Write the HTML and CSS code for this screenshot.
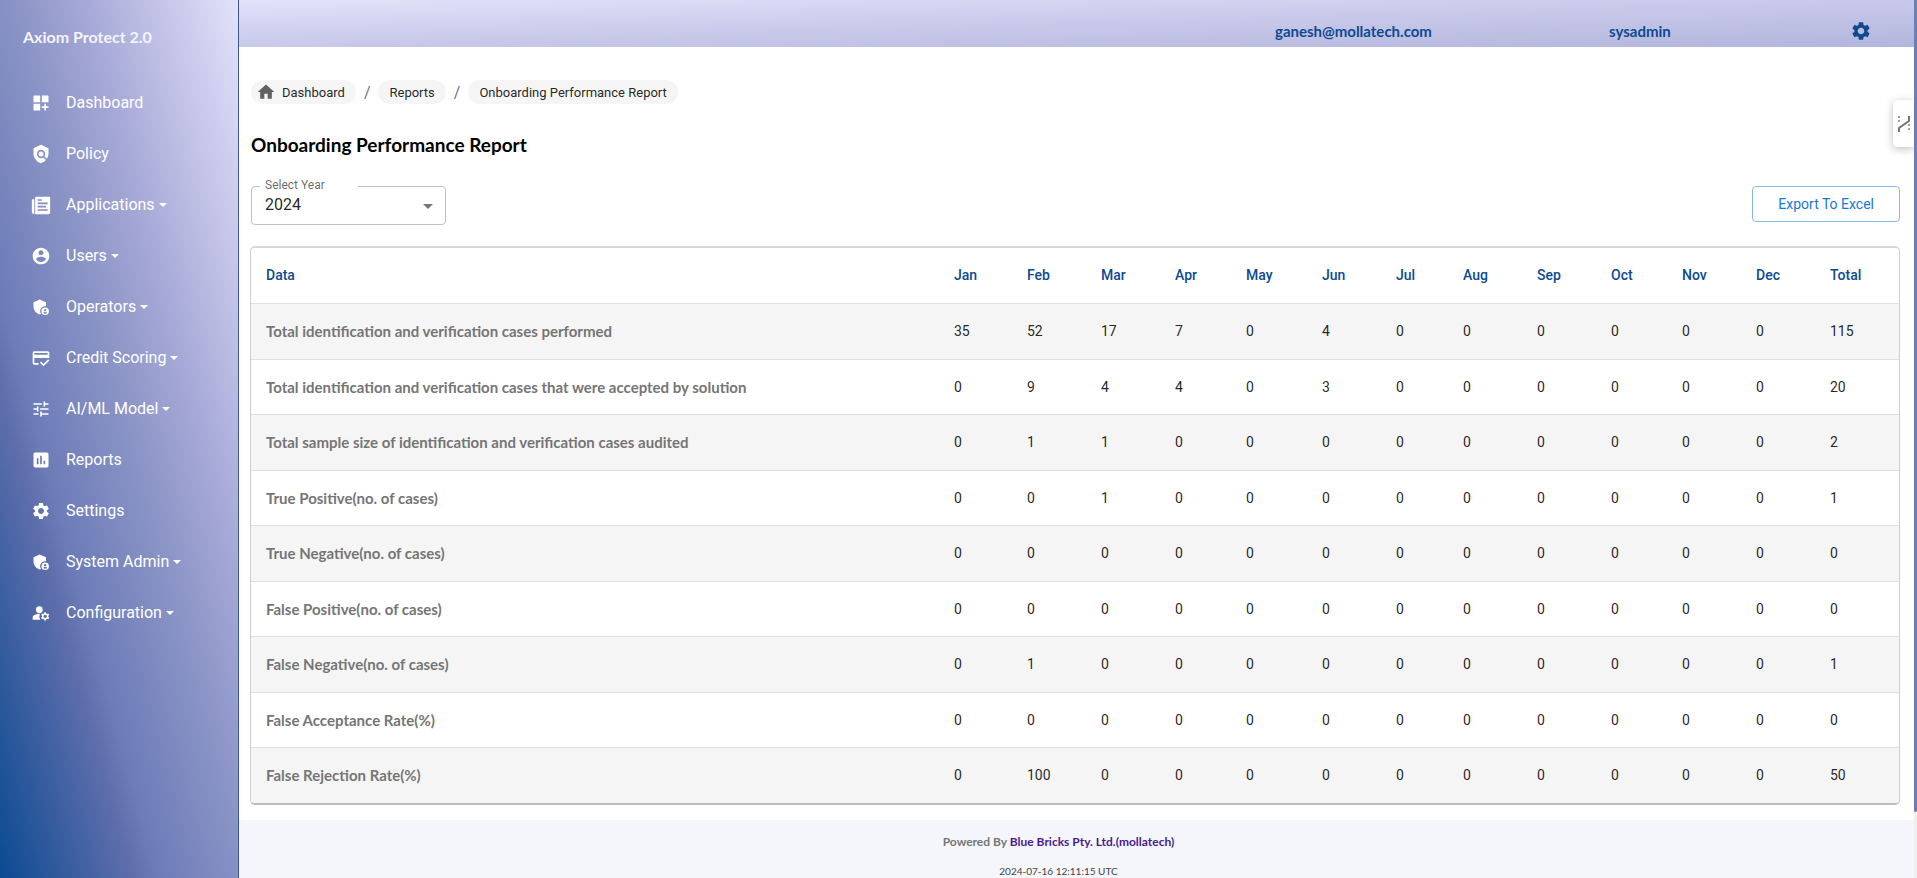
FILE: index.html
```html
<!DOCTYPE html>
<html lang="en">
<head>
<meta charset="utf-8">
<title>Onboarding Performance Report</title>
<link rel="stylesheet" href="styles.css">
</head>
<body>
<svg class="sprite" aria-hidden="true">
  <symbol id="i-shield-user" viewBox="0 0 24 24"><path d="M17 11c.34 0 .67.04 1 .09V6.27L10.5 3 3 6.27v4.91c0 4.54 3.2 8.79 7.5 9.82.55-.13 1.08-.32 1.6-.55-.69-.98-1.1-2.17-1.1-3.45 0-3.31 2.69-6 6-6z"/><path fill-rule="evenodd" d="M17 12.500a4.500 4.500 0 1 0 0 9 4.500 4.500 0 0 0 0-9zm0 1.900a1.400 1.400 0 1 1 0 2.800 1.400 1.400 0 0 1 0-2.800zm0 5.700c-.93 0-1.740-.46-2.240-1.170.05-.72 1.510-1.080 2.240-1.080s2.190.36 2.240 1.080c-.5.71-1.310 1.170-2.240 1.170z"/></symbol>
  <symbol id="i-gear" viewBox="0 0 24 24"><path d="M19.14 12.94c.04-.3.06-.61.06-.94 0-.32-.02-.64-.07-.94l2.03-1.58c.18-.14.23-.41.12-.61l-1.92-3.32c-.12-.22-.37-.29-.59-.22l-2.39.96c-.5-.38-1.03-.7-1.62-.94l-.36-2.54c-.04-.24-.24-.41-.48-.41h-3.84c-.24 0-.43.17-.47.41l-.36 2.54c-.59.24-1.13.57-1.62.94l-2.39-.96c-.22-.08-.47 0-.59.22L2.74 8.87c-.12.21-.08.47.12.61l2.03 1.58c-.05.3-.09.63-.09.94s.02.64.07.94l-2.03 1.58c-.18.14-.23.41-.12.61l1.92 3.32c.12.22.37.29.59.22l2.39-.96c.5.38 1.03.7 1.62.94l.36 2.54c.05.24.24.41.48.41h3.84c.24 0 .44-.17.47-.41l.36-2.54c.59-.24 1.13-.56 1.62-.94l2.39.96c.22.08.47 0 .59-.22l1.92-3.32c.12-.22.07-.47-.12-.61l-2.01-1.58zM12 15.6c-1.98 0-3.6-1.62-3.6-3.6s1.62-3.6 3.6-3.6 3.6 1.62 3.6 3.6-1.62 3.6-3.6 3.6z"/></symbol>
</svg>
<div class="app">
  <aside class="sidebar">
    <div class="brand">Axiom Protect 2.0</div>
    <nav class="nav">
      <a class="nav-item" href="#"><svg class="icon" viewBox="0 0 24 24"><path d="M3 4a1 1 0 0 1 1-1h6a1 1 0 0 1 1 1v7H3zM13 3h7a1 1 0 0 1 1 1v7h-8zM3 13h8v8H4a1 1 0 0 1-1-1zM18 13h-2v3h-3v2h3v3h2v-3h3v-2h-3z"/></svg><span>Dashboard</span></a>
      <a class="nav-item" href="#"><svg class="icon" viewBox="0 0 24 24"><path d="M21 5l-9-4-9 4v6c0 5.55 3.84 10.74 9 12 2.3-.56 4.33-1.9 5.88-3.71l-3.12-3.12c-1.94 1.29-4.58 1.07-6.29-.64-1.95-1.95-1.95-5.12 0-7.07 1.95-1.95 5.12-1.95 7.07 0 1.71 1.71 1.92 4.35.64 6.29l2.9 2.9C20.29 15.69 21 13.38 21 11V5z"/><circle cx="12" cy="12" r="3"/></svg><span>Policy</span></a>
      <a class="nav-item" href="#"><svg class="icon" viewBox="0 0 24 24"><path d="M3 5H2a1 1 0 0 0-1 1v14c0 1.650 1.350 3 3 3V5z"/><path fill-rule="evenodd" d="M22 2H6a1 1 0 0 0-1 1v20h16a2 2 0 0 0 2-2V3a1 1 0 0 0-1-1zM8 5h5v2H8zM8 9h12v2H8zM8 13h10v2H8zM8 17h12v2H8z"/></svg><span class="caret">Applications</span></a>
      <a class="nav-item" href="#"><svg class="icon" viewBox="0 0 24 24"><path d="M12 2C6.48 2 2 6.48 2 12s4.48 10 10 10 10-4.48 10-10S17.52 2 12 2zm0 3c1.66 0 3 1.34 3 3s-1.34 3-3 3-3-1.34-3-3 1.34-3 3-3zm0 14.2c-2.5 0-4.71-1.28-6-3.22.03-1.99 4-3.08 6-3.08 1.99 0 5.97 1.09 6 3.08-1.29 1.94-3.5 3.22-6 3.22z"/></svg><span class="caret">Users</span></a>
      <a class="nav-item" href="#"><svg class="icon"><use href="#i-shield-user"/></svg><span class="caret">Operators</span></a>
      <a class="nav-item" href="#"><svg class="icon" viewBox="0 0 24 24"><path d="M20 4H4c-1.11 0-1.99.89-1.99 2L2 18c0 1.11.89 2 2 2h5v-2H4v-6h18V6c0-1.11-.89-2-2-2zm0 4H4V6h16v2zm-5.07 11.17-2.83-2.83-1.41 1.41L14.93 22 22 14.93l-1.41-1.41-5.66 5.65z"/></svg><span class="caret">Credit Scoring</span></a>
      <a class="nav-item" href="#"><svg class="icon" viewBox="0 0 24 24"><path d="M3 17v2h6v-2H3zM3 5v2h10V5H3zm10 16v-2h8v-2h-8v-2h-2v6h2zM7 9v2H3v2h4v2h2V9H7zm14 4v-2H11v2h10zm-6-4h2V7h4V5h-4V3h-2v6z"/></svg><span class="caret">AI/ML Model</span></a>
      <a class="nav-item" href="#"><svg class="icon" viewBox="0 0 24 24"><path d="M19 3H5c-1.1 0-2 .9-2 2v14c0 1.1.9 2 2 2h14c1.1 0 2-.9 2-2V5c0-1.1-.9-2-2-2zM9 17H7v-7h2v7zm4 0h-2V7h2v10zm4 0h-2v-4h2v4z"/></svg><span>Reports</span></a>
      <a class="nav-item" href="#"><svg class="icon"><use href="#i-gear"/></svg><span>Settings</span></a>
      <a class="nav-item" href="#"><svg class="icon"><use href="#i-shield-user"/></svg><span class="caret">System Admin</span></a>
      <a class="nav-item" href="#"><svg class="icon" viewBox="0 0 24 24"><circle cx="10" cy="8" r="4"/><path d="M10.67 13.02C7.88 12.88 5.38 13.71 3.51 14.82 2.56 15.38 2 16.43 2 17.54V20h9.26a6.96 6.96 0 0 1-.59-6.98z"/><path fill-rule="evenodd" d="M20.75 16c0-.22-.03-.42-.06-.63l1.14-1.01-1-1.73-1.45.49c-.32-.27-.68-.48-1.08-.63L18 11h-2l-.3 1.49c-.4.15-.76.36-1.08.63l-1.45-.49-1 1.73 1.14 1.01c-.03.21-.06.41-.06.63s.03.42.06.63l-1.14 1.01 1 1.73 1.45-.49c.32.27.68.48 1.08.63L16 21h2l.3-1.49c.4-.15.76-.36 1.08-.63l1.45.49 1-1.73-1.14-1.01c.03-.21.06-.41.06-.63zM17 18a2 2 0 1 1 0-4 2 2 0 0 1 0 4z"/></svg><span class="caret">Configuration</span></a>
    </nav>
  </aside>

  <div class="page">
    <header class="topbar">
      <span class="account">ganesh@mollatech.com</span>
      <span class="role">sysadmin</span>
      <button class="gear-button" type="button" aria-label="Settings"><svg class="gear"><use href="#i-gear"/></svg></button>
    </header>

    <main class="content">
      <nav class="crumbs" aria-label="Breadcrumb">
        <a class="chip chip-home" href="#"><svg class="home" viewBox="0 0 24 24"><path d="M10 20v-6h4v6h5v-8h3L12 3 2 12h3v8z"/></svg>Dashboard</a>
        <span class="slash">/</span>
        <a class="chip" href="#">Reports</a>
        <span class="slash">/</span>
        <a class="chip" href="#">Onboarding Performance Report</a>
      </nav>

      <h1 class="title">Onboarding Performance Report</h1>

      <div class="toolbar">
        <div class="field">
          <label class="field-label" for="year">Select Year</label>
          <select class="field-select" id="year"><option>2024</option><option>2023</option></select>
          <svg class="field-arrow" viewBox="0 0 10 5"><path d="M0 0h10L5 5z"/></svg>
        </div>
        <button class="export" type="button">Export To Excel</button>
      </div>

      <div class="card">
        <table class="report">
          <colgroup><col class="c-data"><col class="c-n"><col class="c-m"><col class="c-m"><col class="c-s"><col class="c-l"><col class="c-m"><col class="c-xs"><col class="c-m"><col class="c-m"><col class="c-s"><col class="c-m"><col class="c-m"><col class="c-total"></colgroup>
          <thead>
            <tr><th>Data</th><th>Jan</th><th>Feb</th><th>Mar</th><th>Apr</th><th>May</th><th>Jun</th><th>Jul</th><th>Aug</th><th>Sep</th><th>Oct</th><th>Nov</th><th>Dec</th><th>Total</th></tr>
          </thead>
          <tbody>
            <tr><th scope="row">Total identification and verification cases performed</th><td>35</td><td>52</td><td>17</td><td>7</td><td>0</td><td>4</td><td>0</td><td>0</td><td>0</td><td>0</td><td>0</td><td>0</td><td>115</td></tr>
            <tr><th scope="row">Total identification and verification cases that were accepted by solution</th><td>0</td><td>9</td><td>4</td><td>4</td><td>0</td><td>3</td><td>0</td><td>0</td><td>0</td><td>0</td><td>0</td><td>0</td><td>20</td></tr>
            <tr><th scope="row">Total sample size of identification and verification cases audited</th><td>0</td><td>1</td><td>1</td><td>0</td><td>0</td><td>0</td><td>0</td><td>0</td><td>0</td><td>0</td><td>0</td><td>0</td><td>2</td></tr>
            <tr><th scope="row">True Positive(no. of cases)</th><td>0</td><td>0</td><td>1</td><td>0</td><td>0</td><td>0</td><td>0</td><td>0</td><td>0</td><td>0</td><td>0</td><td>0</td><td>1</td></tr>
            <tr><th scope="row">True Negative(no. of cases)</th><td>0</td><td>0</td><td>0</td><td>0</td><td>0</td><td>0</td><td>0</td><td>0</td><td>0</td><td>0</td><td>0</td><td>0</td><td>0</td></tr>
            <tr><th scope="row">False Positive(no. of cases)</th><td>0</td><td>0</td><td>0</td><td>0</td><td>0</td><td>0</td><td>0</td><td>0</td><td>0</td><td>0</td><td>0</td><td>0</td><td>0</td></tr>
            <tr><th scope="row">False Negative(no. of cases)</th><td>0</td><td>1</td><td>0</td><td>0</td><td>0</td><td>0</td><td>0</td><td>0</td><td>0</td><td>0</td><td>0</td><td>0</td><td>1</td></tr>
            <tr><th scope="row">False Acceptance Rate(%)</th><td>0</td><td>0</td><td>0</td><td>0</td><td>0</td><td>0</td><td>0</td><td>0</td><td>0</td><td>0</td><td>0</td><td>0</td><td>0</td></tr>
            <tr><th scope="row">False Rejection Rate(%)</th><td>0</td><td>100</td><td>0</td><td>0</td><td>0</td><td>0</td><td>0</td><td>0</td><td>0</td><td>0</td><td>0</td><td>0</td><td>50</td></tr>
          </tbody>
        </table>
      </div>
    </main>

    <footer class="footer">
      <div class="powered">Powered By <a href="#">Blue Bricks Pty. Ltd.(mollatech)</a></div>
      <div class="stamp">2024-07-16 12:11:15 UTC</div>
    </footer>

    <button class="side-tab" type="button" aria-label="Open panel"><svg class="side-icon" viewBox="0 0 14 18"><path class="solid" d="M2 17v-4l10-7V1"/><path class="dots" d="M2 1v8M12 9v8"/></svg></button>
  </div>
  <div class="scroll-track"><div class="scroll-thumb"></div></div>
</div>
</body>
</html>
```
FILE: styles.css
```css
* { box-sizing: border-box; }

body {
  margin: 0;
  font-family: Roboto, "Liberation Sans", sans-serif;
  font-size: 14px;
  color: rgba(0, 0, 0, 0.87);
  background: #fff;
}

a { color: inherit; text-decoration: none; }
button { font: inherit; cursor: pointer; }
svg { fill: currentColor; flex: none; }
.sprite { display: none; }

.app {
  display: grid;
  grid-template-columns: 239px minmax(0, 1fr) 3px;
  height: 100vh;
  overflow: hidden;
}

/* Sidebar */
.sidebar {
  border-right: 1px solid #3c5596;
  background: linear-gradient(to top right, #0b4a91 0%, #5f6eac 28%, #6c7cb8 33%, #8690c3 50%, #a5a8d6 67%, #e2e2fa 100%);
  color: #fff;
}
.brand {
  padding: 25px 23px 0;
  font: 700 16px/24px Lato, sans-serif;
  color: #f4f4fc;
}
.nav { padding-top: 28px; }
.nav-item {
  display: flex;
  align-items: center;
  gap: 15px;
  height: 51px;
  padding-left: 31px;
  font-size: 16px;
}
.icon { width: 20px; height: 20px; }
.caret::after {
  content: "";
  display: inline-block;
  margin-left: 4px;
  vertical-align: 3px;
  border: 4px solid transparent;
  border-top-color: currentColor;
  border-bottom: 0;
}

/* Page column */
.page {
  position: relative;
  display: flex;
  flex-direction: column;
  min-width: 0;
  overflow: hidden;
}
.topbar {
  flex: none;
  display: grid;
  grid-template-columns: 1fr 334px 241px 64px;
  align-items: center;
  height: 47px;
  padding-top: 14px;
  background: linear-gradient(to bottom right, #e2e2fa, #c8c9ea 50%, #b2b5dc);
  color: #0d4a92;
  font: 700 15px/24px Lato, sans-serif;
}
.account { grid-column: 2; }
.gear-button { display: flex; padding: 0; border: 0; background: none; color: inherit; }
.gear { width: 22px; height: 22px; }

.content { flex: none; padding: 33px 14px 15px 12px; }

.crumbs { display: flex; align-items: center; height: 24px; }
.chip {
  display: flex;
  align-items: center;
  height: 24px;
  padding: 0 11px;
  border-radius: 12px;
  background: #f5f5f5;
  font-size: 13px;
}
.chip-home { gap: 6px; padding-left: 5px; }
.home { width: 20px; height: 20px; color: #616161; }
.slash { padding: 0 8px; font-size: 16px; color: rgba(0, 0, 0, 0.6); }

.title {
  margin: 29px 0 0;
  font: 700 19px/24px Lato, sans-serif;
  color: #000;
}

.toolbar {
  display: flex;
  justify-content: space-between;
  align-items: flex-start;
  margin-top: 29px;
}
.field { position: relative; width: 195px; }
.field-select {
  display: block;
  width: 100%;
  height: 39px;
  padding: 0 32px 1px 13px;
  border: 1px solid #c0c0c0;
  border-radius: 4px;
  background: #fff;
  color: inherit;
  font: 16px/24px Roboto, sans-serif;
  appearance: none;
}
.field-label {
  position: absolute;
  top: -8px;
  left: 9px;
  width: 98px;
  padding-left: 5px;
  background: #fff;
  color: rgba(0, 0, 0, 0.6);
  font-size: 12px;
  line-height: 14px;
}
.field-arrow {
  position: absolute;
  right: 13px;
  top: 18px;
  width: 10px;
  height: 5px;
  color: #757575;
}
.export {
  height: 36px;
  padding: 0 25px;
  border: 1px solid #8cb9e8;
  border-radius: 4px;
  background: #fff;
  color: #1976d2;
  font-size: 14px;
}

/* Report table */
.card {
  margin: 21px 0 0 -1px;
  border: 1px solid #cdcdcd;
  border-top: 2px solid #d8d8d8;
  border-bottom: 2px solid #bdbdbd;
  border-radius: 5px;
  overflow: hidden;
}
.report {
  width: 100%;
  border-collapse: separate;
  border-spacing: 0;
  table-layout: fixed;
}
.c-xs { width: 67px; }
.c-s { width: 71px; }
.c-n { width: 73px; }
.c-m { width: 74px; }
.c-l { width: 76px; }
.c-total { width: 84px; }
.report th,
.report td {
  padding: 16px 0 16px 15px;
  line-height: 23px;
  text-align: left;
  white-space: nowrap;
}
.report th { font-weight: 500; }
.report thead th { color: #0d4a92; }
.report tbody > tr > * { border-top: 1px solid #e0e0e0; }
.report tbody tr:nth-child(odd) { background: #f5f5f5; }
.report tbody tr:nth-child(even) > * { padding-bottom: 15px; }
.report tbody th {
  color: #757575;
  font: 700 15px/23px Lato, sans-serif;
}

/* Footer */
.footer {
  flex: 1;
  padding: 11px 36px 0 0;
  background: #f4f6fb;
  text-align: center;
  font-family: Lato, sans-serif;
}
.powered { font-size: 12px; font-weight: 700; line-height: 22px; color: #757575; }
.powered a { color: #4b1a8c; }
.stamp { margin-top: 9px; font-size: 10px; line-height: 18px; color: #444; }

.side-tab {
  position: absolute;
  top: 100px;
  right: 0;
  display: flex;
  align-items: center;
  width: 21px;
  height: 47px;
  padding: 0 0 0 4px;
  border: 0;
  border-radius: 4px 0 0 4px;
  background: #fff;
  box-shadow: 0 2px 8px rgba(0, 0, 0, 0.25);
}
.side-icon { width: 14px; height: 18px; fill: none; stroke: #757575; stroke-width: 2; }
.dots { stroke-dasharray: 2 2; stroke: #a0a0a0; }

.scroll-track { background: #f0f0f0; }
.scroll-thumb { height: 92.5%; background: #6a80b4; border-radius: 0 0 2px 2px; }
```
